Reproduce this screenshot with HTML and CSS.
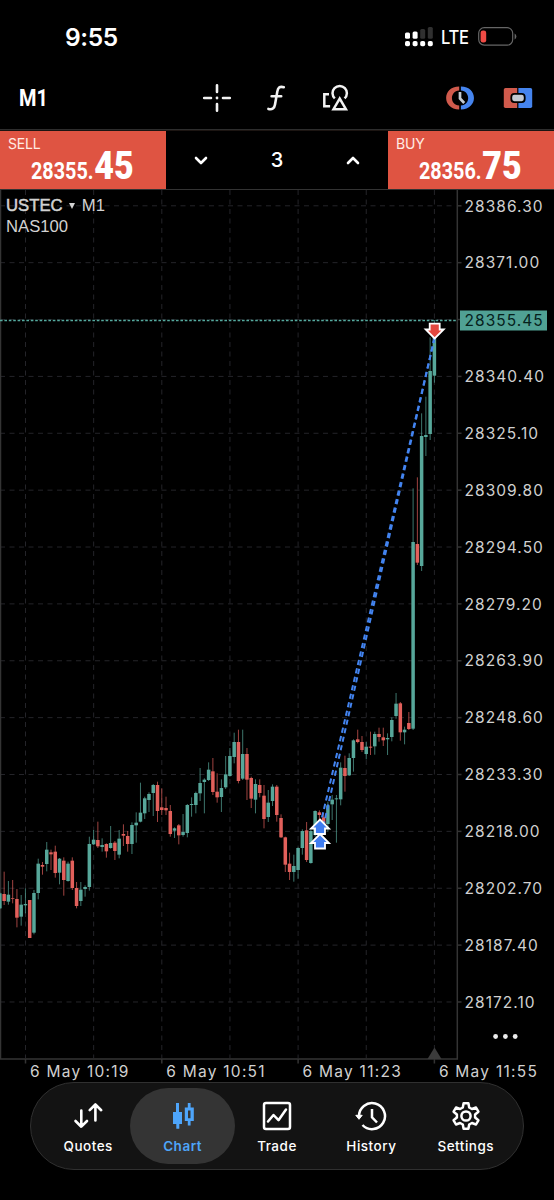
FILE: index.html
```html
<!DOCTYPE html>
<html lang="en">
<head>
  <meta charset="UTF-8">
  <meta name="viewport" content="width=device-width, initial-scale=1.0">
  <title>USTEC M1</title>
  <link rel="stylesheet" href="styles.css">
</head>
<body>
  <div class="status">
    <div class="time">9:55</div>
    <div class="status-right">
      <svg class="signal" width="28" height="20" viewBox="0 0 28 20">
        <g fill="#fff">
          <rect x="0" y="5.5" width="5" height="6.3" rx="1.5"/>
          <rect x="7.6" y="4.5" width="5" height="7.3" rx="1.5"/>
          <rect x="0" y="14" width="5" height="5.2" rx="1.8"/>
          <rect x="7.6" y="14" width="5" height="5.2" rx="1.8"/>
          <rect x="15.2" y="14" width="5" height="5.2" rx="1.8"/>
          <rect x="22.8" y="14" width="5" height="5.2" rx="1.8"/>
        </g>
        <g fill="#303030">
          <rect x="15.2" y="2" width="5" height="9.8" rx="1.5"/>
          <rect x="22.8" y="0" width="5" height="11.8" rx="1.5"/>
        </g>
      </svg>
      <span class="lte">LTE</span>
      <svg class="battery" width="39" height="19" viewBox="0 0 39 19">
        <rect x=".7" y=".7" width="34" height="17.4" rx="5.5" fill="none" stroke="#666" stroke-width="1.2"/>
        <rect x="2.6" y="3.4" width="5.6" height="12.2" rx="2.3" fill="#f04b45"/>
        <path d="M36.6 6.4a3.4 3.4 0 0 1 0 6z" fill="#666"/>
      </svg>
    </div>
  </div>

  <div class="toolbar">
    <div class="timeframe"><span>M1</span></div>
    <div class="tools">
      <svg width="30" height="30" viewBox="0 0 30 30" fill="none" stroke="#f2f2f2" stroke-width="2.6" stroke-linecap="round">
        <path d="M15 2.200v6.800M15 21v6.800M2.200 15h6.800M21 15h6.800"/>
        <circle cx="15" cy="15" r="1.4" fill="#f2f2f2" stroke="none"/>
      </svg>
      <svg width="30" height="30" viewBox="0 0 30 30" fill="none" stroke="#f2f2f2" stroke-width="2.6" stroke-linecap="round">
        <path d="M22.8 4.2C18.4 3 16.9 5 16.3 8.6L14 21.4C13.4 25.2 11.2 27 7.4 25.900M10.6 13.2h9.6"/>
      </svg>
      <svg width="30" height="30" viewBox="0 0 30 30" fill="none" stroke="#f2f2f2" stroke-width="2.5">
        <path d="M9 11.2H4.300v12h5.800"/>
        <path d="M14.800 15.4A7.200 7.200 0 1 1 24.600 15.4"/>
        <path d="M19.700 15.6L13.500 26.200h12.400z"/>
      </svg>
    </div>
    <div class="modes">
      <svg width="30" height="30" viewBox="0 0 30 30" fill="none">
        <path d="M14.2 3.6C-3.200 3.600-3.200 26.400 14.200 26.400V22.600C4.500 22 4.500 8 14.200 7.400z" fill="#d05a4c"/>
        <path d="M15.900 3.6C33.300 3.600 33.300 26.400 15.900 26.400V22.600C25.600 22 25.600 8 15.900 7.400z" fill="#4584ee"/>
        <path d="M15 9v6.400l4.200 4.600" stroke="#c3c9d1" stroke-width="2.7"/>
      </svg>
      <svg width="30" height="30" viewBox="0 0 30 30">
        <path d="M2.5 5h11.7v20H2.5a1.7 1.7 0 0 1-1.7-1.7V6.7a1.7 1.7 0 0 1 1.7-1.7z" fill="#d05a4c"/>
        <path d="M15.4 5h12.1a1.7 1.7 0 0 1 1.7 1.7v16.6a1.7 1.7 0 0 1-1.7 1.7H15.4z" fill="#4584ee"/>
        <rect x="8.3" y="10.9" width="13.4" height="8.2" rx="3" fill="#c3c9d1" stroke="#000" stroke-width="1.8"/>
      </svg>
    </div>
  </div>

  <div class="deal">
    <div class="side">
      <div class="side-name">SELL</div>
      <div class="quote">28355.<b>45</b></div>
    </div>
    <div class="volume">
      <svg width="14" height="9" viewBox="0 0 14 9"><path d="M2 2l5 5 5-5"/></svg>
      <span>3</span>
      <svg width="14" height="9" viewBox="0 0 14 9"><path d="M2 7l5-5 5 5"/></svg>
    </div>
    <div class="side">
      <div class="side-name">BUY</div>
      <div class="quote">28356.<b>75</b></div>
    </div>
  </div>

  <div class="chart">
    <svg id="plot" width="554" height="892" viewBox="0 190 554 892"></svg>
    <div class="symbol">
      <div><b>USTEC</b> <i></i> M1</div>
      <div>NAS100</div>
    </div>
  </div>

  <nav class="tabbar">
    <a class="tab">
      <svg width="32" height="32" viewBox="0 0 32 32" fill="none" stroke="#fff" stroke-width="2.6" stroke-linecap="round" stroke-linejoin="round">
        <path d="M9.300 10.500v16M3.500 21l5.800 5.700L15 21M23.400 20.500V4.500M17.700 10.200l5.700-5.700 5.800 5.700"/>
      </svg>
      Quotes
    </a>
    <a class="tab active">
      <svg width="32" height="32" viewBox="0 0 32 32" fill="#4ea5fa">
        <path d="M9 3h3v9h3v12h-2.700v4.800h-3V24H6V12h3z"/>
        <path fill-rule="evenodd" d="M20.800 3h2.800v4.500h3.200V21h-3.200v4.500h-2.800V21h-3V7.500h3zM21 10.500v7.800h2.500v-7.800z"/>
      </svg>
      Chart
    </a>
    <a class="tab">
      <svg width="32" height="32" viewBox="0 0 32 32" fill="none" stroke="#fff" stroke-width="2.5" stroke-linejoin="round">
        <rect x="3" y="3" width="26" height="26" rx="2"/>
        <path d="M7 21.500l5.500-6.500 5 5.200L25 9.500" stroke-linecap="round"/>
      </svg>
      Trade
    </a>
    <a class="tab">
      <svg width="32" height="32" viewBox="0 0 32 32" fill="none" stroke="#fff" stroke-width="2.5">
        <path d="M4 16.500A13 13 0 1 1 7.500 25"/>
        <path d="M.8 15.300h6.400L4 19.300z" fill="#fff" stroke-width="1"/>
        <path d="M17 9v8.300l5 5.200"/>
      </svg>
      History
    </a>
    <a class="tab">
      <svg width="32" height="32" viewBox="0 0 32 32" fill="none" stroke="#fff" stroke-width="2.500" stroke-linejoin="round">
        <path d="M13.600 3.200h4.800l.8 4.300 2.700 1.500 4.100-1.500 2.400 4.200-3.300 2.800v3l3.300 2.800-2.400 4.200-4.100-1.500-2.700 1.500-.8 4.300h-4.800l-.8-4.300-2.700-1.500L6 24.500l-2.400-4.200 3.300-2.800v-3l-3.300-2.800L6 7.500 10.100 9l2.700-1.500z"/>
        <circle cx="16" cy="16" r="4.600"/>
      </svg>
      Settings
    </a>
  </nav>
  <script src="chart.js"></script>
</body>
</html>
```

FILE: styles.css
```css
body {
  margin: 0;
  width: 554px;
  height: 1200px;
  overflow: hidden;
  background: #000;
  color: #fff;
  font-family: Inter, "Liberation Sans", sans-serif;
}
svg {display: block; flex: none;}
.status {
  height: 65px;
  display: flex;
  justify-content: space-between;
  box-sizing: border-box;
  padding: 22px 37px 0 65px;
}
.time {font-size: 24.5px; line-height: 30px; font-weight: 600; letter-spacing: -0.4px;}
.status-right {display: flex; align-items: flex-start;}
.signal {margin-top: 5px;}
.lte {
  font-size: 19px;
  line-height: 32px;
  font-weight: 500;
  margin-left: 8px;
  width: 29px;
  margin-right: 8px;
  letter-spacing: -0.4px;
  transform: scaleX(0.87);
  transform-origin: left;
}
.battery {margin-top: 5px;}
.toolbar {
  height: 65px;
  display: flex;
  align-items: center;
  box-sizing: border-box;
  padding: 2px 20px 0 19px;
  border-bottom: 1px solid #2d2d2d;
}
.timeframe {width: 183px; font: 700 23.5px Roboto, sans-serif;}
.timeframe span {display: inline-block; transform: scaleX(0.85); transform-origin: left;}
.tools {display: flex; gap: 29px;}
.modes {display: flex; gap: 28px; margin-left: auto;}
.modes svg:last-child {margin-right: 1px;}
.deal {
  height: 60px;
  box-sizing: border-box;
  display: flex;
  border-top: 1px solid #1c1512;
  border-bottom: 1px solid #333;
}
.side {width: 166px; background: #df5442;}
.side-name {font-size: 14px; line-height: 16px; padding: 5px 0 0 8px; color: #ffebe4; letter-spacing: -0.2px;}
.quote {
  margin: -7px 0 0 31px;
  font: 700 23px/42px Roboto, sans-serif;
  white-space: nowrap;
  transform: scaleX(0.86);
  transform-origin: left;
}
.quote b {font-size: 39.5px; margin-left: 1px;}
.volume {
  width: 222px;
  box-sizing: border-box;
  padding: 0 28px;
  display: flex;
  align-items: center;
  justify-content: space-between;
  font-size: 20px;
  font-weight: 500;
}
.volume path {fill: none; stroke: #fff; stroke-width: 2.6; stroke-linecap: round; stroke-linejoin: round;}
.chart {position: relative; height: 892px;}
.symbol {
  position: absolute;
  left: 6px;
  top: 5px;
  font: 16.7px/21px "Liberation Sans", sans-serif;
  color: #d2d2d2;
}
.symbol b {font-weight: normal; -webkit-text-stroke: 0.5px #d2d2d2;}
.symbol i {
  display: inline-block;
  border: 3px solid transparent;
  border-top: 6px solid #d2d2d2;
  border-bottom: 0;
  margin: 0 2px 2px;
}
.grid {stroke: #242429; stroke-width: 1; stroke-dasharray: 5 4.5;}
.frame {stroke: #343434; stroke-width: 1.5; fill: none;}
.up {fill: #57a79a;}
.down {fill: #e2605b;}
.wick {opacity: 0.7;}
.axis {font-size: 15.5px; fill: #d0d0d0; letter-spacing: 1.05px;}
.axis.date {letter-spacing: 1.25px;}
.axis.now {fill: #06211d;}
.bid {stroke: #55aa9f; stroke-width: 1.5; stroke-dasharray: 2.6 1.8;}
.trade {stroke: #4384f0; stroke-width: 2; stroke-dasharray: 5.2 3.5;}
.mark {stroke: #fff; stroke-width: 1.8;}
.tabbar {
  width: 494px;
  height: 88px;
  margin: 0 0 0 30px;
  padding: 5px 10px;
  box-sizing: border-box;
  display: flex;
  border: 1px solid #303030;
  border-radius: 44px;
  background: #131313;
}
.tab {
  flex: 0 0 94.4px;
  display: flex;
  flex-direction: column;
  align-items: center;
  box-sizing: border-box;
  padding-top: 12px;
  font-size: 13.5px;
  line-height: 16px;
  font-weight: 500;
  letter-spacing: 0.5px;
  gap: 6px;
}
.tab.active {
  margin: 0 -5.3px;
  flex: 0 0 105px;
  border-radius: 38px;
  background: #343434;
  color: #4ea5fa;
  font-weight: 600;
}
```

FILE: chart.js
```js
const plot = document.getElementById('plot');
const NOW_X = 434.4;
const STEP = 4.26;

// bars: [dir, high, body top, body bottom, low], offsets in thirds of a pixel under base
const parts = [
  { base: 770, first: 102, bars: [
    [1,368,370,415,417],[0,305,372,393,405],[1,333,374,395,404],[0,330,385,387,400],[0,357,387,443,472],
    [1,375,404,440,467],[1,355,402,406,430],[0,390,390,504,504],[1,360,369,488,493],[1,266,281,369,388],
    [0,276,285,290,314],[1,216,239,282,304],[0,239,247,253,300],[0,227,245,309,323],[1,264,266,308,343],
    [0,262,272,330,377],[1,275,281,333,335],[0,262,272,354,360],[0,336,354,408,415],[1,336,359,393,408],
    [1,346,351,357,380],[1,200,222,351,362],[1,180,209,223,225],[0,155,210,229,234],[1,205,225,231,245],
    [0,220,222,244,263],[1,168,219,234,236],[0,213,218,243,270],[1,180,206,254,265],[0,163,192,197,228],
    [0,183,198,222,245],[1,157,165,222,252],[1,127,158,166,218],[1,38,128,155,157],[1,80,85,130,147]
  ]},
  { base: 720, first: 67, bars: [
    [1,217,222,240,276],[1,192,195,219,288],[0,185,195,273,306],[0,205,262,270,285],[0,230,264,271,285],
    [0,255,273,342,350],[1,322,325,332,354],[0,312,316,346,373],[1,282,336,345,350],[1,252,255,339,352],
    [1,232,252,255,290],[1,215,219,255,280],[1,144,189,220,243],[1,175,179,186,280],[1,127,149,180,183],
    [0,114,154,216,225],[0,160,215,232,248],[1,178,204,231,276],[1,108,163,202,207],[1,84,108,168,170],
    [1,38,66,111,130],[0,29,66,183,190],[1,29,102,176,180],[0,84,102,179,240],[0,170,174,236,264],
    [1,178,192,239,280],[0,178,195,219,232],[0,195,227,297,325],[1,210,248,291,306],[1,193,200,243,258],
    [0,195,200,285,305],[0,283,294,352,354],[0,350,352,434,456]
  ]},
  { base: 680, first: 34, bars: [
    [0,518,551,576,600],[1,524,558,576,605],[1,502,504,570,596],[1,448,453,504,524],[0,426,451,540,546],
    [1,448,453,549,551],[1,391,393,465,470],[0,391,397,405,430],[0,400,412,435,440],[1,365,376,432,455],
    [1,345,359,373,420],[1,345,355,358,488],[1,247,263,358,376],[0,227,264,288,335],[1,220,234,286,288],
    [1,178,181,234,275],[0,149,178,186,190],[0,168,186,210,216],[1,186,200,222,238],[0,155,200,203,225],
    [1,155,162,199,224],[0,143,162,171,185],[0,143,172,181,198],[1,160,174,178,225],[1,112,120,171,184],
    [1,39,71,108,116],[0,66,70,157,182],[1,140,149,157,193],[0,96,129,147,150]
  ]},
  { base: 300, first: 5, bars: [
    [1,565,726,1286,1290],[0,532,732,788,795],[1,340,408,798,813],[1,290,405,411,468],[1,112,213,402,420],
    [1,60,70,227,248]
  ]}
];

let out = '';

// grid
for (let i = 0; i < 7; i++) {
  const x = 25.5 + i * 68.15;
  out += `<line class="grid" x1="${x}" x2="${x}" y1="190" y2="1058"/>`;
}
for (let i = 0; i < 15; i++) {
  const y = 205.8 + i * 56.87;
  out += `<line class="grid" x1="0" x2="456" y1="${y}" y2="${y}"/>`;
  out += `<line class="frame" x1="457" x2="461.5" y1="${y}" y2="${y}"/>`;
  if (i !== 2) out += `<text class="axis" x="464.5" y="${y + 5.7}">${(28386.3 - i * 15.3).toFixed(2)}</text>`;
}
out += '<path class="frame" d="M.5 190V1059H457.3V190"/>';

['10:19', '10:51', '11:23', '11:55'].forEach((t, i) => {
  const x = 25.5 + i * 136.3;
  out += `<line class="frame" x1="${x}" x2="${x}" y1="1059" y2="1063.5"/>`;
  out += `<text class="axis date" x="${x + 4.5}" y="1076.5">6 May ${t}</text>`;
});
out += '<path d="M427.5 1059l7-11.5 7 11.5z" fill="#3b3b3b"/>';

// candles
parts.forEach(p => p.bars.forEach((b, i) => {
  const x = NOW_X - (p.first - i) * STEP;
  const y = v => p.base + v / 3;
  const cls = b[0] ? 'up' : 'down';
  out += `<rect class="${cls} wick" x="${x - 0.5}" y="${y(b[1])}" width="1" height="${(b[4] - b[1]) / 3}"/>`;
  out += `<rect class="${cls}" x="${x - 1.75}" y="${y(b[2])}" width="3.5" height="${(b[3] - b[2]) / 3}"/>`;
}));

// current price
out += '<line class="bid" x1="0" x2="457" y1="320.5" y2="320.5"/>';
out += '<rect x="460" y="310.5" width="87" height="20" fill="#50a194"/>';
out += '<text class="axis now" x="464.5" y="326">28355.45</text>';

// deals
out += '<line class="trade" x1="434.5" y1="338" x2="320" y2="826"/>';
out += '<line class="trade" x1="434.5" y1="338" x2="320" y2="841"/>';
const up = y => `<path class="mark" fill="#3f7df0" d="M320 ${y}l9 9h-4v5.5h-10v-5.5h-4z"/>`;
out += up(834) + up(819.5);
out += '<path class="mark" fill="#e4483f" d="M434.7 338.5l-9-9h4v-5.800h10v5.800h4z"/>';

// more
[495.6, 505.4, 515.2].forEach(x => {
  out += `<circle cx="${x}" cy="1036.5" r="2.4" fill="#ececec"/>`;
});

plot.innerHTML = out;
```
